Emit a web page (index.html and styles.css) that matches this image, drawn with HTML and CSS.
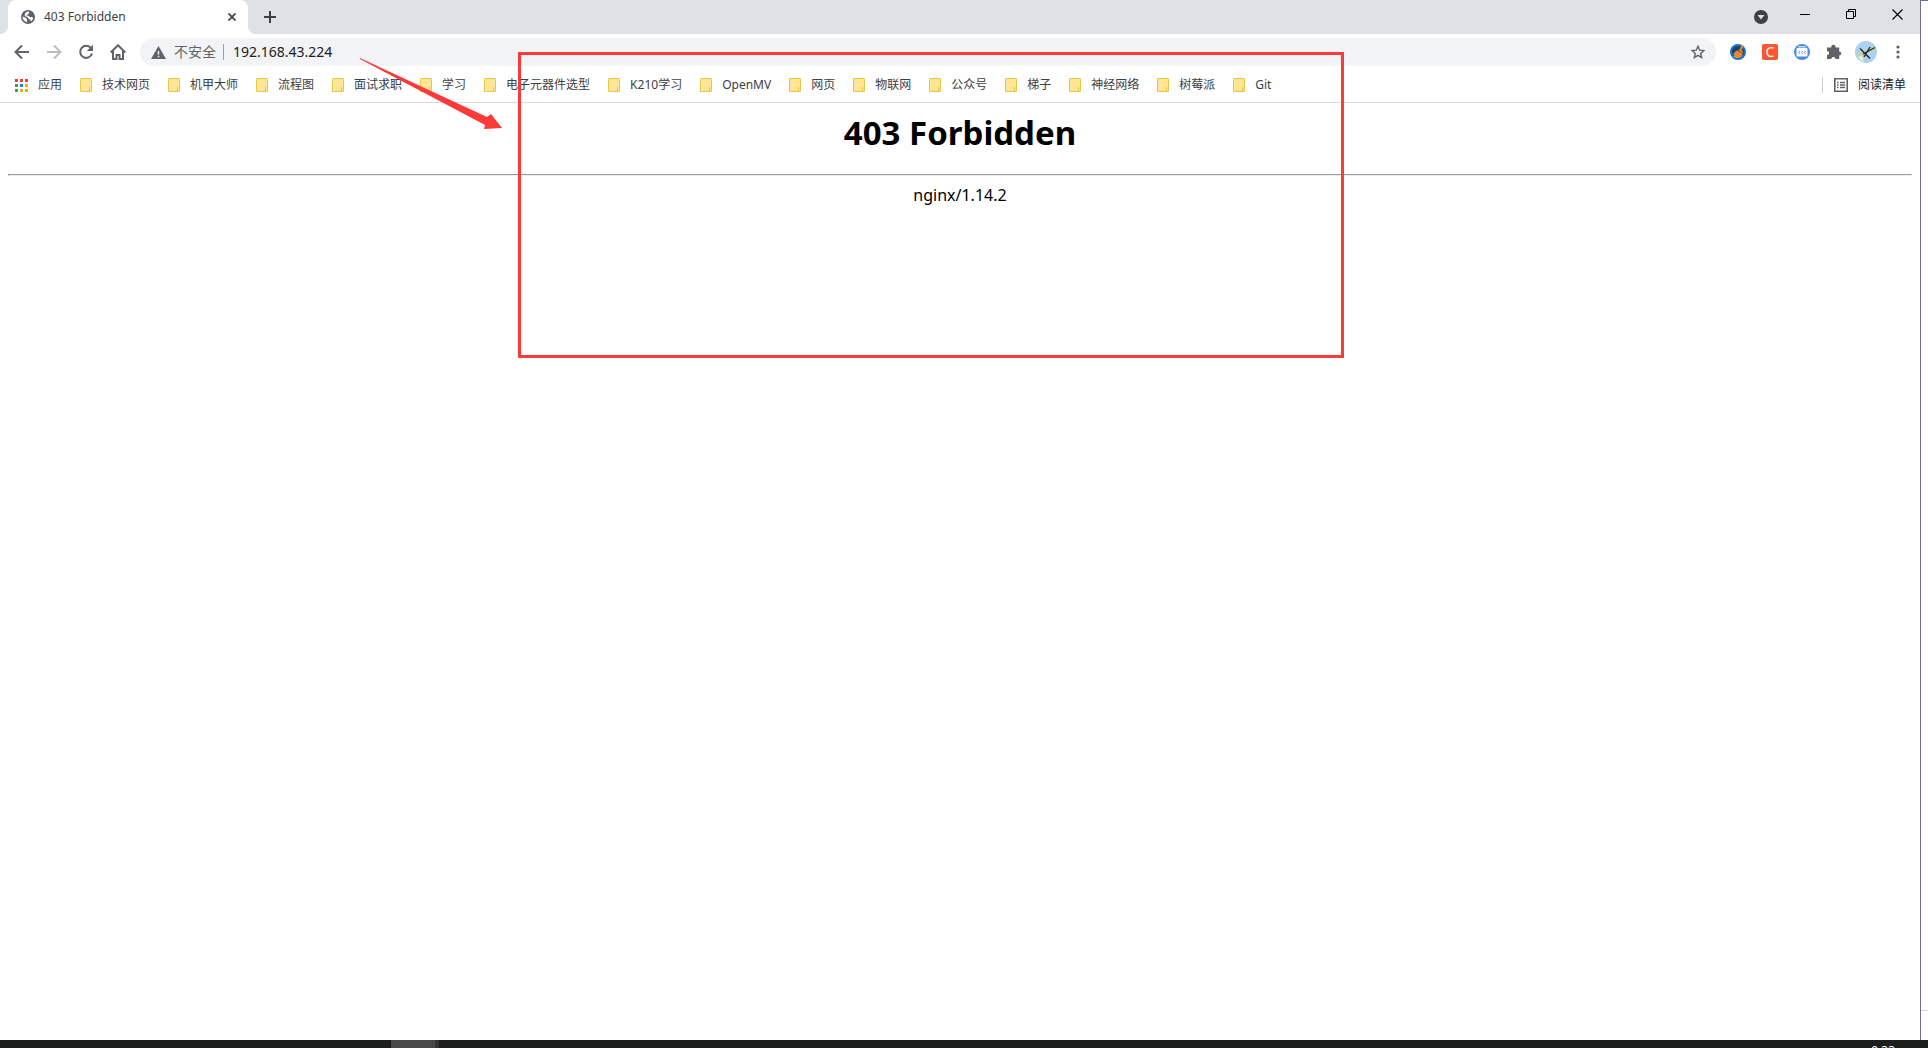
FILE: index.html
```html
<!DOCTYPE html>
<html lang="zh-CN">
<head>
<meta charset="utf-8">
<title>403 Forbidden</title>
<link rel="stylesheet" href="styles.css">
</head>
<body>
<div class="desktop">
  <div class="browser">
    <header class="tabstrip">
      <div class="tab">
        <svg class="globe" width="14" height="14" viewBox="0 0 14 14"><circle cx="7" cy="7" r="7" fill="#5f6368"/><path d="M1.5 6.5 5 8l1 1.200v2.800C3.500 11.600 1.300 9.500 1.500 6.500ZM7.500 1.500l1 1-2 2.200-1.700.8 2.700.3 1.500 1.500 2-.2 1.200 1c-.3 1.500-1.200 2.700-2.300 3.300l-.6-1.700-2.300-1.500-.5-1.500-2.700-.5C3.500 3 5 1.500 7.500 1.500Z" fill="#fff"/></svg>
        <span class="tab-title">403 Forbidden</span>
        <button class="plain tab-close" aria-label="关闭"><svg width="8" height="8" viewBox="0 0 8 8"><path d="M.5.5l7 7M7.500.5l-7 7" stroke="#3c4043" stroke-width="1.700"/></svg></button>
      </div>
      <button class="plain new-tab" aria-label="新标签页"><svg width="12" height="12" viewBox="0 0 12 12"><path d="M6 0v12M0 6h12" stroke="#3c4043" stroke-width="2"/></svg></button>
      <div class="window-controls">
        <button class="plain tab-search" aria-label="搜索标签页"><svg width="14" height="14" viewBox="0 0 14 14"><circle cx="7" cy="7" r="7" fill="#3c4043"/><path d="M3.500 5h7L7 9.500Z" fill="#dee1e6"/></svg></button>
        <button class="plain" aria-label="最小化"><svg width="10" height="11" viewBox="0 0 10 11"><path d="M0 5.500h10" stroke="#000"/></svg></button>
        <button class="plain" aria-label="还原"><svg width="10" height="10" viewBox="0 0 10 10"><path d="M.5 2.500h7v7h-7zM2.500 2.500v-2h7v7h-2" fill="none" stroke="#000"/></svg></button>
        <button class="plain" aria-label="关闭窗口"><svg width="11" height="11" viewBox="0 0 11 11"><path d="M.5.5l10 10M10.500.5l-10 10" stroke="#000" stroke-width="1.100"/></svg></button>
      </div>
    </header>
    <div class="toolbar">
      <div class="nav">
        <button class="plain" aria-label="后退"><svg width="16" height="16" viewBox="0 0 16 16"><path d="M15 8H2M8 1.500 1.500 8 8 14.500" fill="none" stroke="#5f6368" stroke-width="2"/></svg></button>
        <button class="plain" aria-label="前进"><svg width="16" height="16" viewBox="0 0 16 16"><path d="M1 8h13M8 1.500 14.500 8 8 14.500" fill="none" stroke="#babcbe" stroke-width="2"/></svg></button>
        <button class="plain" aria-label="重新加载"><svg width="16" height="16" viewBox="0 0 16 16"><path d="M13 4.200A6 6 0 1 0 14 9.500" fill="none" stroke="#5f6368" stroke-width="2"/><path d="M15 .8V7H8.800Z" fill="#5f6368"/></svg></button>
        <button class="plain" aria-label="主页"><svg width="16" height="16" viewBox="0 0 16 16"><path d="M.7 8.500 8 1.300l7.300 7.200M3 7v8h3.500v-4h3v4H13V7" fill="none" stroke="#5f6368" stroke-width="2"/></svg></button>
      </div>
      <div class="omnibox">
        <svg width="15" height="13" viewBox="0 0 15 13"><path d="M7.500 0 15 13H0Z" fill="#5f6368"/><path d="M7.500 5v3.500M7.500 9.700v1.600" stroke="#f1f3f4" stroke-width="1.500"/></svg>
        <span class="insecure">不安全</span>
        <input class="address" aria-label="地址" value="192.168.43.224">
        <button class="plain star" aria-label="收藏"><svg width="14" height="14" viewBox="0 0 14 14"><path d="m7 1.300 1.700 3.900 4.200.4-3.200 2.800 1 4.200L7 10.400l-3.700 2.200 1-4.200L1.100 5.600l4.200-.4Z" fill="none" stroke="#5f6368" stroke-width="1.400"/></svg></button>
      </div>
      <div class="extensions">
        <button class="plain" aria-label="清理"><svg width="16" height="16" viewBox="0 0 16 16"><circle cx="8" cy="8" r="8" fill="#1670d5"/><circle cx="8" cy="8" r="6" fill="#1d4468"/><path d="m11.500 1 2.200 1-2.200 4 1.500 1.500-1 5c-3 2.500-6.500 2-9 0l1.500-1.500L3 10l4-3.700 2 .2Z" fill="#e08a35"/><path d="m7 6.300 5 2.500" stroke="#9b4c1e"/></svg></button>
        <button class="plain ext-c" aria-label="C">C</button>
        <button class="plain" aria-label="消息"><svg width="16" height="16" viewBox="0 0 16 16"><circle cx="8" cy="8" r="8" fill="#468bea"/><path d="M4 2.800h8" stroke="#fff"/><rect x="2.500" y="4" width="11" height="8.500" rx="1" fill="#fff"/><path d="M6 7 4.800 8.500 6 10M8.800 7 7.600 8.500 8.800 10M11.600 7l-1.200 1.500 1.200 1.500" fill="none" stroke="#468bea" stroke-width=".9"/></svg></button>
        <button class="plain" aria-label="扩展程序"><svg width="16" height="16" viewBox="0 0 16 16"><path d="M1 3.500h4.300a2.200 2.200 0 1 1 4.200 0h3.700v4a2 2 0 1 1 0 4V15H9.500a2.100 2.100 0 0 0-4.200 0H1v-3.800a2.100 2.100 0 0 0 0-4.200Z" fill="#5f6368"/></svg></button>
        <button class="plain" aria-label="用户"><svg width="22" height="22" viewBox="0 0 22 22"><circle cx="11" cy="11" r="11" fill="#a9d3ef"/><path d="m3 16 4-2 2 7.500a11 11 0 0 1-6-5.500Z" fill="#e0f3cb"/><path d="M3 14.500 20 7" stroke="#d6cf90" stroke-width="2.500"/><path d="m8 13 12-6.500M5 7.500l10 10M9 16l6-10" stroke="#222b25" stroke-width="1.400"/></svg></button>
        <button class="plain" aria-label="菜单"><svg width="4" height="14" viewBox="0 0 4 14" fill="#5f6368"><circle cx="2" cy="2" r="1.600"/><circle cx="2" cy="7" r="1.600"/><circle cx="2" cy="12" r="1.600"/></svg></button>
      </div>
    </div>
    <nav class="bookmarks">
      <a class="apps" href="#"><svg width="13" height="13" viewBox="0 0 13 13"><path d="M0 0h3v3H0zM5 0h3v3H5zM10 0h3v3h-3z" fill="#ea4335"/><path d="M0 5h3v3H0zM0 10h3v3H0z" fill="#34a853"/><path d="M5 5h3v3H5z" fill="#1a82f7"/><path d="M10 5h3v3h-3zM5 10h3v3H5zM10 10h3v3h-3z" fill="#f2ab0c"/></svg>应用</a>
      <a class="folder" href="#">技术网页</a>
      <a class="folder" href="#">机甲大师</a>
      <a class="folder" href="#">流程图</a>
      <a class="folder" href="#">面试求职</a>
      <a class="folder" href="#">学习</a>
      <a class="folder" href="#">电子元器件选型</a>
      <a class="folder" href="#">K210学习</a>
      <a class="folder" href="#">OpenMV</a>
      <a class="folder" href="#">网页</a>
      <a class="folder" href="#">物联网</a>
      <a class="folder" href="#">公众号</a>
      <a class="folder" href="#">梯子</a>
      <a class="folder" href="#">神经网络</a>
      <a class="folder" href="#">树莓派</a>
      <a class="folder" href="#">Git</a>
      <button class="plain reading-list"><svg width="14" height="14" viewBox="0 0 14 14"><path d="M.8.8h12.400v12.400H.8z" fill="none" stroke="#5f6368" stroke-width="1.600"/><path d="M3 4.500h1.500M3 7h1.500M3 9.500h1.500M6 4.500h5M6 7h5M6 9.500h5" stroke="#5f6368" stroke-width="1.400"/></svg>阅读清单</button>
    </nav>
    <main class="page">
      <h1>403 Forbidden</h1>
      <hr>
      <p>nginx/1.14.2</p>
    </main>
  </div>
  <aside class="behind"></aside>
</div>
<footer class="taskbar"><span class="task"></span><time class="clock">9:33</time></footer>
<div class="highlight"></div>
<svg class="arrow" width="142" height="71" viewBox="0 0 142 71"><path d="M0 0 127 59l4-3 11 14-18 1 1-4L0 1Z" fill="#fc3a3a"/></svg>
</body>
</html>
```
FILE: styles.css
```css
*, ::before, ::after { box-sizing: border-box; }
body {
  margin: 0;
  height: 100vh;
  display: flex;
  flex-direction: column;
  overflow: hidden;
  background: #fff;
  color: #3c4043;
  font: 12px/16px "Noto Sans", "Noto Sans CJK SC", sans-serif;
}
svg { display: block; flex: none; }
.plain {
  display: flex;
  align-items: center;
  justify-content: center;
  padding: 0;
  border: 0;
  background: none;
  color: inherit;
  font: inherit;
}
.desktop { flex: 1; display: flex; min-height: 0; }
.browser { flex: 1; min-width: 0; display: flex; flex-direction: column; }
.behind {
  width: 8px;
  border-left: 1px solid #6d6e96;
  border-top: 1px solid #6d6e96;
}
.behind::after {
  content: "";
  display: block;
  height: calc(100% - 29px);
  border-bottom: 1px solid #d6d6d6;
}

.tabstrip {
  height: 34px;
  display: flex;
  padding-left: 8px;
  background: #dee1e6;
}
.tab {
  position: relative;
  width: 240px;
  display: flex;
  align-items: center;
  gap: 9px;
  padding: 0 12px 0 13px;
  background: #fff;
  border-radius: 8px 8px 0 0;
}
.tab::before, .tab::after {
  content: "";
  position: absolute;
  bottom: 0;
  width: 8px;
  height: 8px;
}
.tab::before { left: -8px; background: radial-gradient(circle at 0 0, #dee1e6 8px, #fff 8px); }
.tab::after { right: -8px; background: radial-gradient(circle at 100% 0, #dee1e6 8px, #fff 8px); }
.tab-title { flex: 1; }
.new-tab { width: 44px; }
.window-controls { display: flex; margin-left: auto; height: 28px; }
.window-controls .plain { width: 46px; }
.window-controls .tab-search { width: 42px; padding-top: 6px; }

.toolbar { height: 36px; display: flex; align-items: center; padding: 0 6px; }
.nav { display: flex; }
.nav .plain { width: 32px; height: 32px; }
.omnibox {
  flex: 1;
  height: 28px;
  display: flex;
  align-items: center;
  padding: 0 11px;
  margin-left: 6px;
  border-radius: 14px;
  background: #f1f3f4;
  font-size: 14px;
}
.insecure { margin: 0 7px 0 8px; color: #5f6368; }
.address {
  flex: 1;
  min-width: 0;
  height: 16px;
  padding: 0 0 0 9px;
  border: 0;
  border-left: 1px solid #9aa0a6;
  background: none;
  color: #202124;
  font: inherit;
}
.extensions { display: flex; align-items: center; padding-left: 6px; }
.extensions .plain { width: 32px; }
.extensions .ext-c {
  width: 16px;
  height: 16px;
  margin: 0 8px;
  border-radius: 2px;
  background: #fc5531;
  color: #fff;
  font-size: 14px;
}

.bookmarks {
  height: 33px;
  display: flex;
  align-items: center;
  gap: 18px;
  padding: 0 14px 2px 15px;
  border-bottom: 1px solid #d8dadd;
}
.bookmarks a {
  display: flex;
  align-items: center;
  gap: 10px;
  color: inherit;
  text-decoration: none;
  white-space: nowrap;
}
.folder::before {
  content: "";
  width: 12px;
  height: 14px;
  border: 1px solid #e8c64a;
  border-radius: 1px;
  background: linear-gradient(#e8c64a, #e8c64a) 8px 8px / 1px 4px no-repeat #ffe694;
}
.reading-list {
  margin-left: auto;
  padding-left: 11px;
  gap: 10px;
  border-left: 1px solid #ccced1;
  color: #202124;
}

.page { flex: 1; padding: 8px; color: #000; text-align: center; font-size: 16px; line-height: 21px; }
.page h1 { margin: 0 0 20px; font-size: 33px; line-height: 43px; }
.page hr { margin: 0 0 9px; }
.page p { margin: 0; }

.taskbar { position: relative; height: 8px; display: flex; overflow: hidden; background: #1c1d1d; color: #fff; }
.task { width: 48px; margin-left: 391px; background: #484848; border-right: 4px solid #343434; }
.clock { margin-left: auto; padding: 3px 33px 0 0; }

.highlight {
  position: absolute;
  left: 518px;
  top: 52px;
  width: 826px;
  height: 306px;
  border: 3px solid #fc3a3a;
}
.arrow { position: absolute; left: 360px; top: 58px; }
```
